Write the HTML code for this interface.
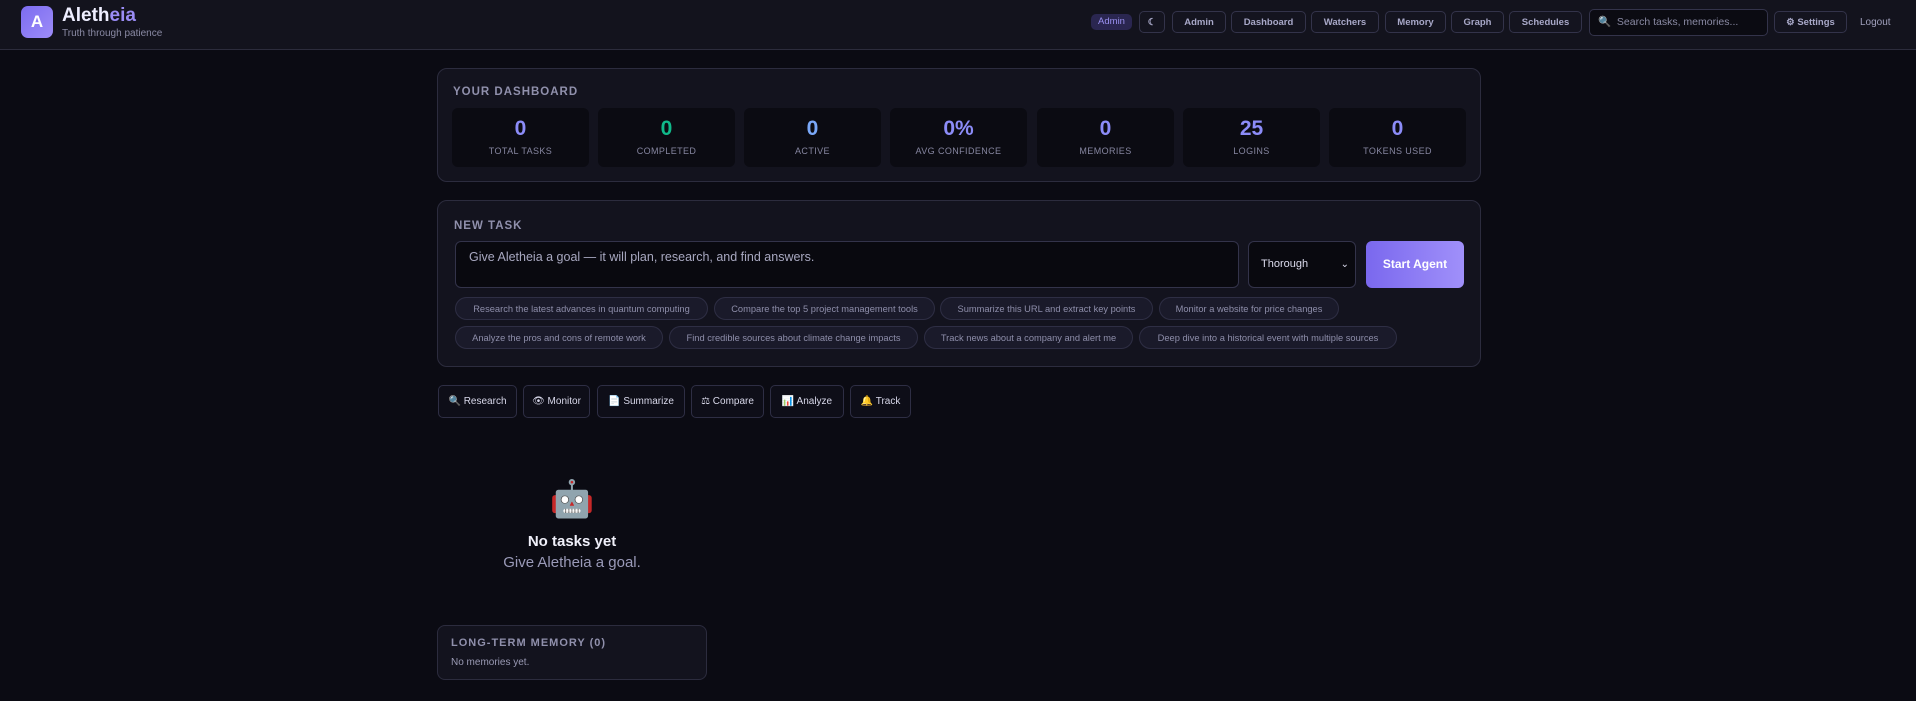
<!DOCTYPE html>
<html><head><meta charset="utf-8"><style>
*{box-sizing:border-box;margin:0;padding:0}
body{width:1916px;height:701px;overflow:hidden;background:#0b0b13;font-family:"Liberation Sans",sans-serif;color:#e6e6f0;position:relative}
.hdr{position:absolute;left:0;top:0;width:1916px;height:50px;background:#13131d;border-bottom:1px solid #2c2c3c}
.logo{position:absolute;left:21px;top:6px;width:32px;height:32px;border-radius:7px;background:linear-gradient(135deg,#7c6cf0,#9d8cf8);color:#fff;font-weight:bold;font-size:17px;text-align:center;line-height:32px}
.brand{position:absolute;left:62px;top:5px;font-size:19px;font-weight:bold;color:#eef}
.brand span{color:#9a8cf5}
.tag{position:absolute;left:62px;top:28px;font-size:10px;color:#8a8aa4}
.nb{position:absolute;top:11px;height:22px;border:1px solid #33334a;border-radius:5px;font-size:9.5px;font-weight:bold;color:#a8a8c8;text-align:center;line-height:22px;background:#14141f}
.card{position:absolute;background:#13131e;border:1px solid #2c2c3e;border-radius:10px}
.ttl{position:absolute;font-size:11.5px;font-weight:bold;letter-spacing:1px;color:#9090ac}
.stat{position:absolute;top:108px;height:59px;width:137px;background:#0b0b12;border-radius:6px;text-align:center}
.stat b{display:block;margin-top:9px;font-size:21px;color:#8c8cf8}
.stat i{display:block;font-style:normal;font-size:9px;color:#8686a0;letter-spacing:.4px;margin-top:5px}
.chip{position:absolute;height:23px;border:1px solid #2e2e44;border-radius:12px;background:#1a1a2a;font-size:9.3px;color:#8e8eaa;line-height:22px;text-align:center;white-space:nowrap;overflow:hidden}
.ab{position:absolute;top:385px;height:33px;border:1px solid #2e2e44;border-radius:5px;background:#0e0e18;font-size:10px;color:#d8d8ea;line-height:31px;text-align:center;white-space:nowrap}
</style></head><body>
<div class="hdr">
<div class="logo">A</div>
<div class="brand">Aleth<span>eia</span></div>
<div class="tag">Truth through patience</div>
<div class="nb" style="left:1091px;top:14px;height:16px;width:41px;line-height:16px;background:#2a2650;border:none;color:#9a90f0;font-weight:normal">Admin</div>
<div class="nb" style="left:1139px;width:26px">☾</div>
<div class="nb" style="left:1172px;width:54px">Admin</div>
<div class="nb" style="left:1231px;width:75px">Dashboard</div>
<div class="nb" style="left:1311px;width:68px">Watchers</div>
<div class="nb" style="left:1385px;width:61px">Memory</div>
<div class="nb" style="left:1451px;width:53px">Graph</div>
<div class="nb" style="left:1509px;width:73px">Schedules</div>
<div class="nb" style="left:1589px;top:9px;height:27px;width:179px;background:#0b0b12;text-align:left;padding-left:8px;line-height:25px;font-weight:normal;font-size:10.5px;color:#8a8aa4">🔍&nbsp; Search tasks, memories...</div>
<div class="nb" style="left:1774px;width:73px">⚙ Settings</div>
<div style="position:absolute;left:1860px;top:17px;font-size:10px;color:#a0a0bc">Logout</div>
</div>

<div class="card" style="left:437px;top:68px;width:1044px;height:114px">
<div class="ttl" style="left:15px;top:17px">YOUR DASHBOARD</div>
</div>
<div class="stat" style="left:452px"><b>0</b><i>TOTAL TASKS</i></div>
<div class="stat" style="left:598px"><b style="color:#10b98a">0</b><i>COMPLETED</i></div>
<div class="stat" style="left:744px"><b style="color:#7aa8f8">0</b><i>ACTIVE</i></div>
<div class="stat" style="left:890px"><b>0%</b><i>AVG CONFIDENCE</i></div>
<div class="stat" style="left:1037px"><b>0</b><i>MEMORIES</i></div>
<div class="stat" style="left:1183px"><b>25</b><i>LOGINS</i></div>
<div class="stat" style="left:1329px"><b>0</b><i>TOKENS USED</i></div>

<div class="card" style="left:437px;top:200px;width:1044px;height:167px">
<div class="ttl" style="left:16px;top:19px">NEW TASK</div>
</div>
<div style="position:absolute;left:455px;top:241px;width:784px;height:47px;background:#09090f;border:1px solid #33334a;border-radius:6px;font-size:12.5px;color:#a8a8c0;padding:8px 13px">Give Aletheia a goal — it will plan, research, and find answers.</div>
<div style="position:absolute;left:1248px;top:241px;width:108px;height:47px;background:#09090f;border:1px solid #33334a;border-radius:6px;font-size:11px;color:#dcdcee;padding:0 12px;line-height:45px">Thorough<span style="position:absolute;right:6px;font-size:10px">⌄</span></div>
<div style="position:absolute;left:1366px;top:241px;width:98px;height:47px;background:linear-gradient(90deg,#7a68ee,#a090fa);border-radius:6px;font-size:12px;font-weight:bold;color:#fff;text-align:center;line-height:47px">Start Agent</div>

<div class="chip" style="left:455px;top:297px;width:253px">Research the latest advances in quantum computing</div>
<div class="chip" style="left:714px;top:297px;width:221px">Compare the top 5 project management tools</div>
<div class="chip" style="left:940px;top:297px;width:213px">Summarize this URL and extract key points</div>
<div class="chip" style="left:1159px;top:297px;width:180px">Monitor a website for price changes</div>
<div class="chip" style="left:455px;top:326px;width:208px">Analyze the pros and cons of remote work</div>
<div class="chip" style="left:669px;top:326px;width:249px">Find credible sources about climate change impacts</div>
<div class="chip" style="left:924px;top:326px;width:209px">Track news about a company and alert me</div>
<div class="chip" style="left:1139px;top:326px;width:258px">Deep dive into a historical event with multiple sources</div>

<div class="ab" style="left:438px;width:79px">🔍 Research</div>
<div class="ab" style="left:523px;width:67px">👁 Monitor</div>
<div class="ab" style="left:597px;width:88px">📄 Summarize</div>
<div class="ab" style="left:691px;width:73px">⚖ Compare</div>
<div class="ab" style="left:770px;width:74px">📊 Analyze</div>
<div class="ab" style="left:850px;width:61px">🔔 Track</div>

<div style="position:absolute;left:472px;top:478px;width:200px;text-align:center;font-size:36px">🤖</div>
<div style="position:absolute;left:472px;top:533px;width:200px;text-align:center;font-size:15px;font-weight:bold;color:#f0f0fa">No tasks yet</div>
<div style="position:absolute;left:452px;top:554px;width:240px;text-align:center;font-size:15px;color:#9a9ab8">Give Aletheia a goal.</div>

<div class="card" style="left:437px;top:625px;width:270px;height:55px;border-radius:8px">
<div class="ttl" style="left:13px;top:11px;font-size:11px">LONG-TERM MEMORY (0)</div>
<div style="position:absolute;left:13px;top:31px;font-size:10px;color:#9a9ab4">No memories yet.</div>
</div>
</body></html>
